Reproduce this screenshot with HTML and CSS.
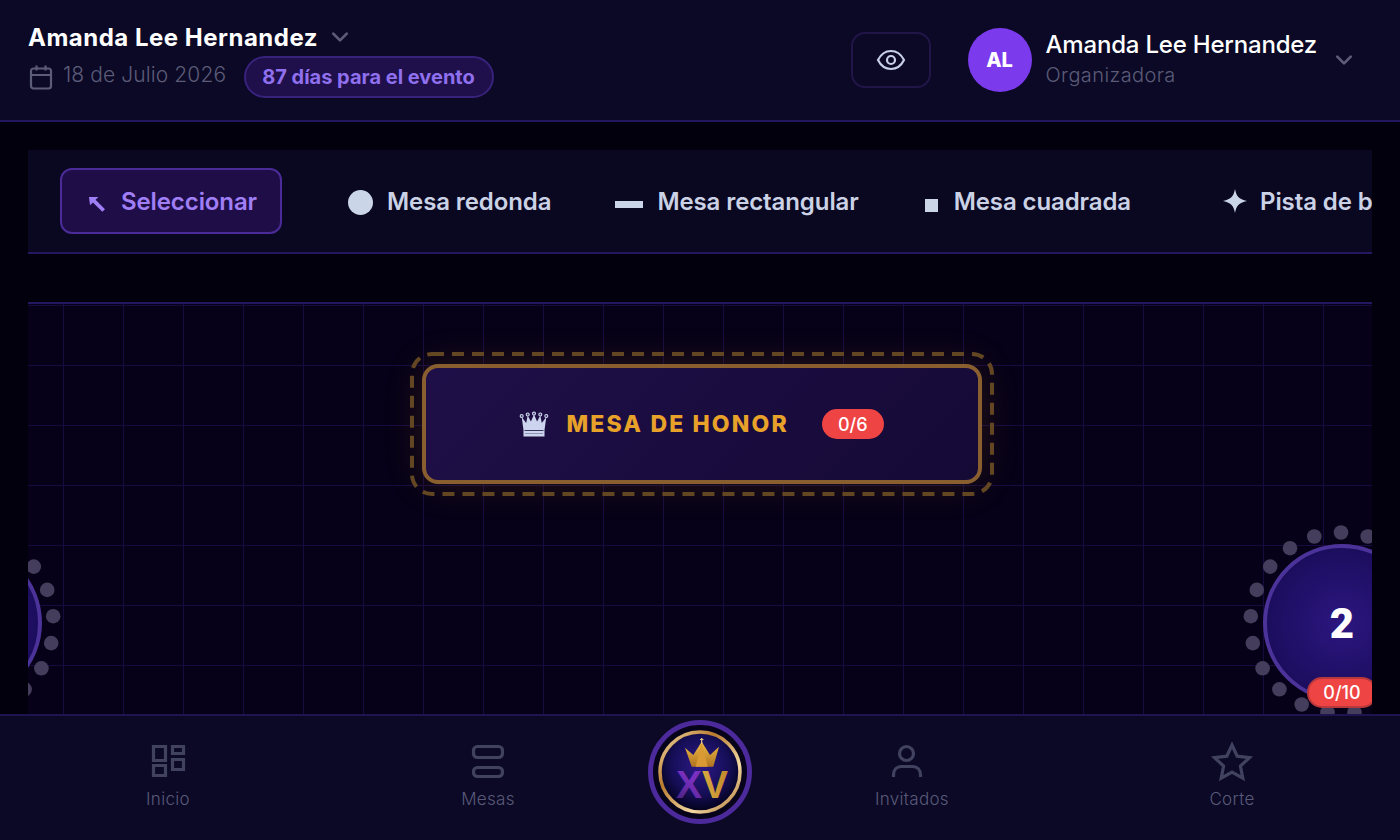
FILE: index.html
```html
<!DOCTYPE html>
<html lang="es">
<head>
  <meta charset="UTF-8">
  <meta name="viewport" content="width=device-width, initial-scale=1.0">
  <title>Mesas</title>
  <link rel="stylesheet" href="styles.css">
</head>
<body>
  <header class="topbar">
    <div class="event-info">
      <div class="event-title">
        <h1>Amanda Lee Hernandez</h1>
        <svg class="chevron" viewBox="0 0 16 10"><path d="M2 2l6 6 6-6"/></svg>
      </div>
      <div class="event-meta">
        <svg class="calendar" viewBox="0 0 24 26"><rect x="2" y="4.5" width="20" height="20" rx="2.5"/><path d="M2 11h20M7.5 1.5v5M16.500 1.500v5"/></svg>
        <span class="event-date">18 de Julio 2026</span>
        <span class="countdown">87 días para el evento</span>
      </div>
    </div>
    <div class="top-actions">
      <button class="eye-button" type="button">
        <svg viewBox="0 0 30 24"><path d="M2 12c3-6 7.500-9 13-9s10 3 13 9c-3 6-7.500 9-13 9s-10-3-13-9z"/><circle cx="15" cy="12" r="4"/></svg>
      </button>
      <div class="user-box">
        <div class="avatar">AL</div>
        <div class="user-text">
          <div class="user-name">Amanda Lee Hernandez</div>
          <div class="user-role">Organizadora</div>
        </div>
        <svg class="chevron user-chevron" viewBox="0 0 16 10"><path d="M2 2l6 6 6-6"/></svg>
      </div>
    </div>
  </header>

  <main class="main">
    <div class="toolbar">
      <button class="tool tool-active" type="button">
        <svg class="icon-arrow" viewBox="0 0 18 18"><path d="M1 1h10l-3 3 10 10-2.800 2.800-10-10-3 3z"/></svg>
        Seleccionar
      </button>
      <button class="tool" type="button"><span class="icon-round"></span>Mesa redonda</button>
      <button class="tool" type="button"><span class="icon-rect"></span>Mesa rectangular</button>
      <button class="tool" type="button"><span class="icon-square"></span>Mesa cuadrada</button>
      <button class="tool" type="button">
        <svg class="icon-star" viewBox="0 0 24 24"><path d="M12 0c1.500 7.500 3.500 10 12 12-8.500 2-10.500 4.500-12 12-1.500-7.500-3.500-10-12-12 8.500-2 10.500-4.500 12-12z"/></svg>
        Pista de baile
      </button>
    </div>

    <section class="canvas">
      <svg class="seats" viewBox="0 0 1344 410">
        <defs>
          <g id="seat-ring">
            <circle cx="0" cy="-90.500" r="7.300"/><circle cx="26.700" cy="-86.500" r="7.300"/><circle cx="51" cy="-74.800" r="7.300"/>
            <circle cx="70.800" cy="-56.400" r="7.300"/><circle cx="84.200" cy="-33.100" r="7.300"/><circle cx="90.200" cy="-6.800" r="7.300"/>
            <circle cx="88.200" cy="20.100" r="7.300"/><circle cx="78.400" cy="45.300" r="7.300"/><circle cx="61.600" cy="66.300" r="7.300"/>
            <circle cx="39.300" cy="81.500" r="7.300"/><circle cx="13.500" cy="89.500" r="7.300"/>
            <circle cx="-26.700" cy="-86.500" r="7.300"/><circle cx="-51" cy="-74.800" r="7.300"/>
            <circle cx="-70.800" cy="-56.400" r="7.300"/><circle cx="-84.200" cy="-33.100" r="7.300"/><circle cx="-90.200" cy="-6.800" r="7.300"/>
            <circle cx="-88.200" cy="20.100" r="7.300"/><circle cx="-78.400" cy="45.300" r="7.300"/><circle cx="-61.600" cy="66.300" r="7.300"/>
            <circle cx="-39.300" cy="81.500" r="7.300"/><circle cx="-13.500" cy="89.500" r="7.300"/>
          </g>
        </defs>
        <use href="#seat-ring" x="-65" y="319"/>
        <use href="#seat-ring" x="1313" y="319"/>
      </svg>

      <div class="honor-table">
        <svg class="honor-dash" viewBox="0 0 584 144"><rect x="2" y="2" width="580" height="140" rx="20"/></svg>
        <svg class="honor-crown" viewBox="0 0 28 25">
          <path d="M1.700 5l4.500 6 1.500-7.500 3.200 6L14 2.500l3.100 7 3.200-6 1.500 7.500 4.500-6L24.500 18v6.500h-21V18z" fill="#cdd5ee"/>
          <path d="M4.500 18.500h19" stroke="#3a3560" stroke-width="1"/>
          <path d="M5 21.500h18" stroke="#8f93b8" stroke-width="1"/>
          <g fill="#3a3560" stroke="#cdd5ee" stroke-width="1.100">
            <circle cx="1.700" cy="4" r="1.500"/><circle cx="7.700" cy="2.500" r="1.500"/><circle cx="14" cy="1.600" r="1.500"/><circle cx="20.300" cy="2.500" r="1.500"/><circle cx="26.300" cy="4" r="1.500"/>
          </g>
        </svg>
        <span class="honor-title">MESA DE HONOR</span>
        <span class="seat-badge">0/6</span>
      </div>

      <div class="round-table table-one"></div>
      <div class="round-table table-two">
        <span class="table-number">2</span>
        <span class="seat-badge table-badge">0/10</span>
      </div>
    </section>
  </main>

  <nav class="bottom-nav">
    <a class="nav-item">
      <svg viewBox="0 0 36 36"><path d="M3.500 3.500h12v14h-12zM22.500 3.500h11v7h-11zM22.500 16.500h11v10h-11zM3.500 22.500h12v10h-12z"/></svg>
      <span>Inicio</span>
    </a>
    <a class="nav-item">
      <svg viewBox="0 0 36 36"><rect x="3.500" y="3.500" width="29" height="11" rx="4"/><rect x="3.500" y="24.500" width="29" height="9" rx="4"/></svg>
      <span>Mesas</span>
    </a>
    <div class="nav-logo">
      <svg viewBox="0 0 104 104">
        <defs>
          <linearGradient id="gold-ring" x1="0" y1="0" x2="1" y2="1">
            <stop offset="0" stop-color="#f6dca8"/><stop offset=".35" stop-color="#b87a30"/>
            <stop offset=".7" stop-color="#f4d9a5"/><stop offset="1" stop-color="#a86c28"/>
          </linearGradient>
          <radialGradient id="logo-fill" cx=".5" cy=".42" r=".55">
            <stop offset="0" stop-color="#2c1a88"/><stop offset=".65" stop-color="#160e58"/><stop offset="1" stop-color="#050320"/>
          </radialGradient>
          <linearGradient id="crown-gold" x1="0" y1="0" x2="0" y2="1">
            <stop offset="0" stop-color="#f0bd48"/><stop offset="1" stop-color="#b0741f"/>
          </linearGradient>
          <linearGradient id="x-fill" x1="0" y1="1" x2="1" y2="0">
            <stop offset="0" stop-color="#3a2070"/><stop offset=".45" stop-color="#7a2fc0"/><stop offset=".72" stop-color="#7a2fc0"/><stop offset="1" stop-color="#cfc8e0"/>
          </linearGradient>
          <linearGradient id="v-fill" x1="0" y1="0" x2="1" y2="0">
            <stop offset="0" stop-color="#f1c85c"/><stop offset="1" stop-color="#c08a2a"/>
          </linearGradient>
        </defs>
        <circle cx="52" cy="52" r="49.500" fill="#06031a" stroke="#4c2a9c" stroke-width="5"/>
        <circle cx="52" cy="52" r="40" fill="url(#logo-fill)" stroke="url(#gold-ring)" stroke-width="3.500"/>
        <path d="M37 27.700l8.300 7.300 8.400-13.300 8.300 13.300 9-8.300-5.700 20H43.700z" fill="url(#crown-gold)"/>
        <path d="M53.700 21.700l-6 25h12z" fill="#d99a34"/>
        <path d="M53.700 18v6M52 19.500h3.400" stroke="#e8c98a" stroke-width="1.200"/>
        <text class="logo-text" x="54" y="78" text-anchor="middle"><tspan fill="url(#x-fill)">X</tspan><tspan fill="url(#v-fill)">V</tspan></text>
      </svg>
    </div>
    <a class="nav-item">
      <svg class="icon-person" viewBox="0 0 36 36"><circle cx="17.500" cy="10.500" r="7"/><path d="M4.500 34v-2c0-5 3-8.500 8-8.500h11c5 0 8 3.500 8 8.500v2"/></svg>
      <span>Invitados</span>
    </a>
    <a class="nav-item">
      <svg class="icon-crown-star" viewBox="0 0 40 38"><path d="M20 3l5.200 11.200 12.300 1.500-9.100 8.300 2.400 12.100L20 30l-10.800 6.100 2.400-12.100-9.100-8.300 12.300-1.500z"/></svg>
      <span>Corte</span>
    </a>
  </nav>
</body>
</html>
```

FILE: styles.css
```css
* {
  box-sizing: border-box;
}
body {
  font-family: Inter, 'Liberation Sans', sans-serif;
  background-color: #02000c;
  margin: 0;
  height: 100vh;
  display: flex;
  flex-direction: column;
  overflow: hidden;
}
.topbar {
  height: 122px;
  flex-shrink: 0;
  display: flex;
  justify-content: space-between;
  align-items: center;
  padding: 0 28px;
  background-color: #0b0926;
  border-bottom: 2px solid #251660;
}
.event-title {
  display: flex;
  align-items: center;
  gap: 13px;
  height: 34px;
  margin-top: -2px;
}
.event-title h1 {
  margin: 0;
  color: #fff;
  font-size: 24px;
  font-weight: 700;
  letter-spacing: 0.5px;
}
.chevron {
  width: 18px;
  height: 12px;
  fill: none;
  stroke: #5c5c78;
  stroke-width: 2.4;
  stroke-linecap: round;
  stroke-linejoin: round;
}
.event-meta {
  display: flex;
  align-items: center;
  margin-top: 2px;
}
.calendar {
  width: 24px;
  height: 26px;
  margin: 0 10px 0 1px;
  fill: none;
  stroke: #5c5c78;
  stroke-width: 2.200;
}
.event-date {
  color: #5c5c78;
  font-size: 21px;
  font-weight: 300;
  letter-spacing: 0.1px;
  margin: 0 18px 6px 0;
}
.countdown {
  height: 42px;
  display: flex;
  align-items: center;
  padding: 0 17px 0 16px;
  color: #8f70ee;
  font-size: 20px;
  font-weight: 700;
  background-color: #1f0f4a;
  border: 2px solid #38227c;
  border-radius: 21px;
}
.top-actions {
  display: flex;
  align-items: center;
  gap: 37px;
}
.eye-button {
  width: 80px;
  height: 56px;
  display: flex;
  align-items: center;
  justify-content: center;
  background: none;
  border: 2px solid #221548;
  border-radius: 14px;
}
.eye-button svg {
  width: 30px;
  height: 24px;
  fill: none;
  stroke: #c9cfe6;
  stroke-width: 2.200;
}
.user-box {
  display: flex;
  align-items: center;
}
.avatar {
  width: 64px;
  height: 64px;
  display: flex;
  align-items: center;
  justify-content: center;
  margin-right: 14px;
  color: #fff;
  font-size: 20px;
  font-weight: 800;
  background-color: #7c3aed;
  border-radius: 50%;
}
.user-text {
  margin-top: -4px;
}
.user-name {
  color: #fff;
  font-size: 24px;
  font-weight: 500;
  letter-spacing: -0.2px;
}
.user-role {
  margin-top: 4px;
  color: #5c5c78;
  font-size: 20px;
  font-weight: 300;
  letter-spacing: 0.4px;
}
.user-chevron {
  margin: 0 19px 0 18px;
}
.main {
  flex: 1;
  min-height: 0;
  display: flex;
  flex-direction: column;
  padding: 28px 28px 0;
  background-color: #02000c;
}
.toolbar {
  height: 104px;
  flex-shrink: 0;
  display: flex;
  align-items: center;
  gap: 3px;
  padding: 0 32px;
  overflow: hidden;
  background-color: #0a0720;
  border-bottom: 2px solid #251660;
}
.tool {
  height: 66px;
  flex-shrink: 0;
  display: flex;
  align-items: center;
  padding: 0 28px;
  color: #cbd2e6;
  font-family: Inter, sans-serif;
  font-size: 24px;
  font-weight: 600;
  letter-spacing: -0.1px;
  background: none;
  border: 2px solid transparent;
  border-radius: 12px;
}
.tool-active {
  padding: 0 23px 0 26px;
  color: #a07ff6;
  background-color: #1f0d47;
  border-color: #4a2b98;
}
.icon-arrow {
  width: 17px;
  height: 17px;
  margin: 6px 16px 0 0;
  fill: #a07ff6;
}
.icon-round {
  width: 25px;
  height: 25px;
  margin: 2px 14px 0 33px;
  background-color: #cbd5e8;
  border-radius: 50%;
}
.icon-rect {
  width: 28px;
  height: 7px;
  margin: 7px 14px 0 1px;
  background-color: #cbd5e8;
}
.icon-square {
  width: 13px;
  height: 13px;
  margin: 9px 16px 0 3px;
  background-color: #cbd5e8;
}
.icon-star {
  width: 24px;
  height: 24px;
  margin: 0 13px 0 29px;
  fill: #cbd5e8;
}
.canvas {
  position: relative;
  flex: 1;
  min-height: 0;
  margin-top: 48px;
  overflow: hidden;
  background-color: #060118;
  background-image:
    linear-gradient(90deg, #180b40 1px, transparent 1px),
    linear-gradient(#180b40 1px, transparent 1px);
  background-size: 60px 60px;
  background-position: 35px 1px;
  border-top: 2px solid #251660;
}
.seats {
  position: absolute;
  top: 0;
  left: 0;
  width: 1344px;
  height: 410px;
  fill: #443e5c;
}
.honor-table {
  position: absolute;
  top: 60px;
  left: 394px;
  width: 560px;
  height: 120px;
  display: flex;
  align-items: center;
  justify-content: center;
  background: linear-gradient(135deg, #1f0f48, #150a36);
  border: 4px solid #8a5f30;
  border-radius: 16px;
  box-shadow: 0 0 40px rgba(245, 158, 11, 0.14);
}
.honor-dash {
  position: absolute;
  top: -16px;
  left: -16px;
  width: 584px;
  height: 144px;
  fill: none;
  stroke: #634622;
  stroke-width: 4;
  stroke-dasharray: 12 8;
}
.honor-crown {
  width: 28px;
  height: 25px;
  margin-right: 18px;
  overflow: visible;
}
.honor-title {
  margin-right: 33px;
  color: #e8a22a;
  font-size: 23px;
  font-weight: 800;
  letter-spacing: 2.150px;
}
.seat-badge {
  height: 30px;
  padding: 0 16px;
  display: flex;
  align-items: center;
  color: #fff;
  font-size: 18px;
  font-weight: 500;
  background-color: #ef4444;
  border-radius: 15px;
}
.round-table {
  position: absolute;
  top: 240px;
  width: 158px;
  height: 158px;
  display: flex;
  align-items: center;
  justify-content: center;
  background: radial-gradient(circle, #2c1680, #150a50);
  border: 4px solid #4b3399;
  border-radius: 50%;
}
.table-one {
  left: -144px;
}
.table-two {
  left: 1235px;
}
.table-number {
  color: #fff;
  font-family: Roboto, sans-serif;
  font-size: 42px;
  font-weight: 900;
}
.table-badge {
  position: absolute;
  left: 40px;
  bottom: -10px;
  width: 70px;
  justify-content: center;
  padding: 0;
  height: 31px;
  border: 2px solid #b8383c;
}
.bottom-nav {
  height: 126px;
  flex-shrink: 0;
  display: grid;
  grid-template-columns: 1fr 1fr 104px 1fr 1fr;
  align-items: center;
  padding: 0 8px 4px;
  background-color: #0b0926;
  border-top: 2px solid #1d1450;
}
.nav-item {
  display: flex;
  flex-direction: column;
  align-items: center;
  gap: 9px;
  color: #5a5a78;
  font-size: 17px;
  font-weight: 300;
  letter-spacing: 0.3px;
}
.nav-item svg {
  width: 36px;
  height: 36px;
  margin: -1px 0 1px;
  fill: none;
  stroke: #414160;
  stroke-width: 3.2;
  overflow: visible;
}
.nav-item .icon-person {
  margin-right: 10px;
}
.nav-item .icon-crown-star {
  width: 40px;
  height: 38px;
  margin: -2px 0 0;
}
.nav-logo {
  margin-bottom: 8px;
}
.nav-logo svg {
  display: block;
  width: 104px;
  height: 104px;
}
.logo-text {
  font-family: 'Liberation Sans', sans-serif;
  font-size: 39px;
  font-weight: 700;
}
```
